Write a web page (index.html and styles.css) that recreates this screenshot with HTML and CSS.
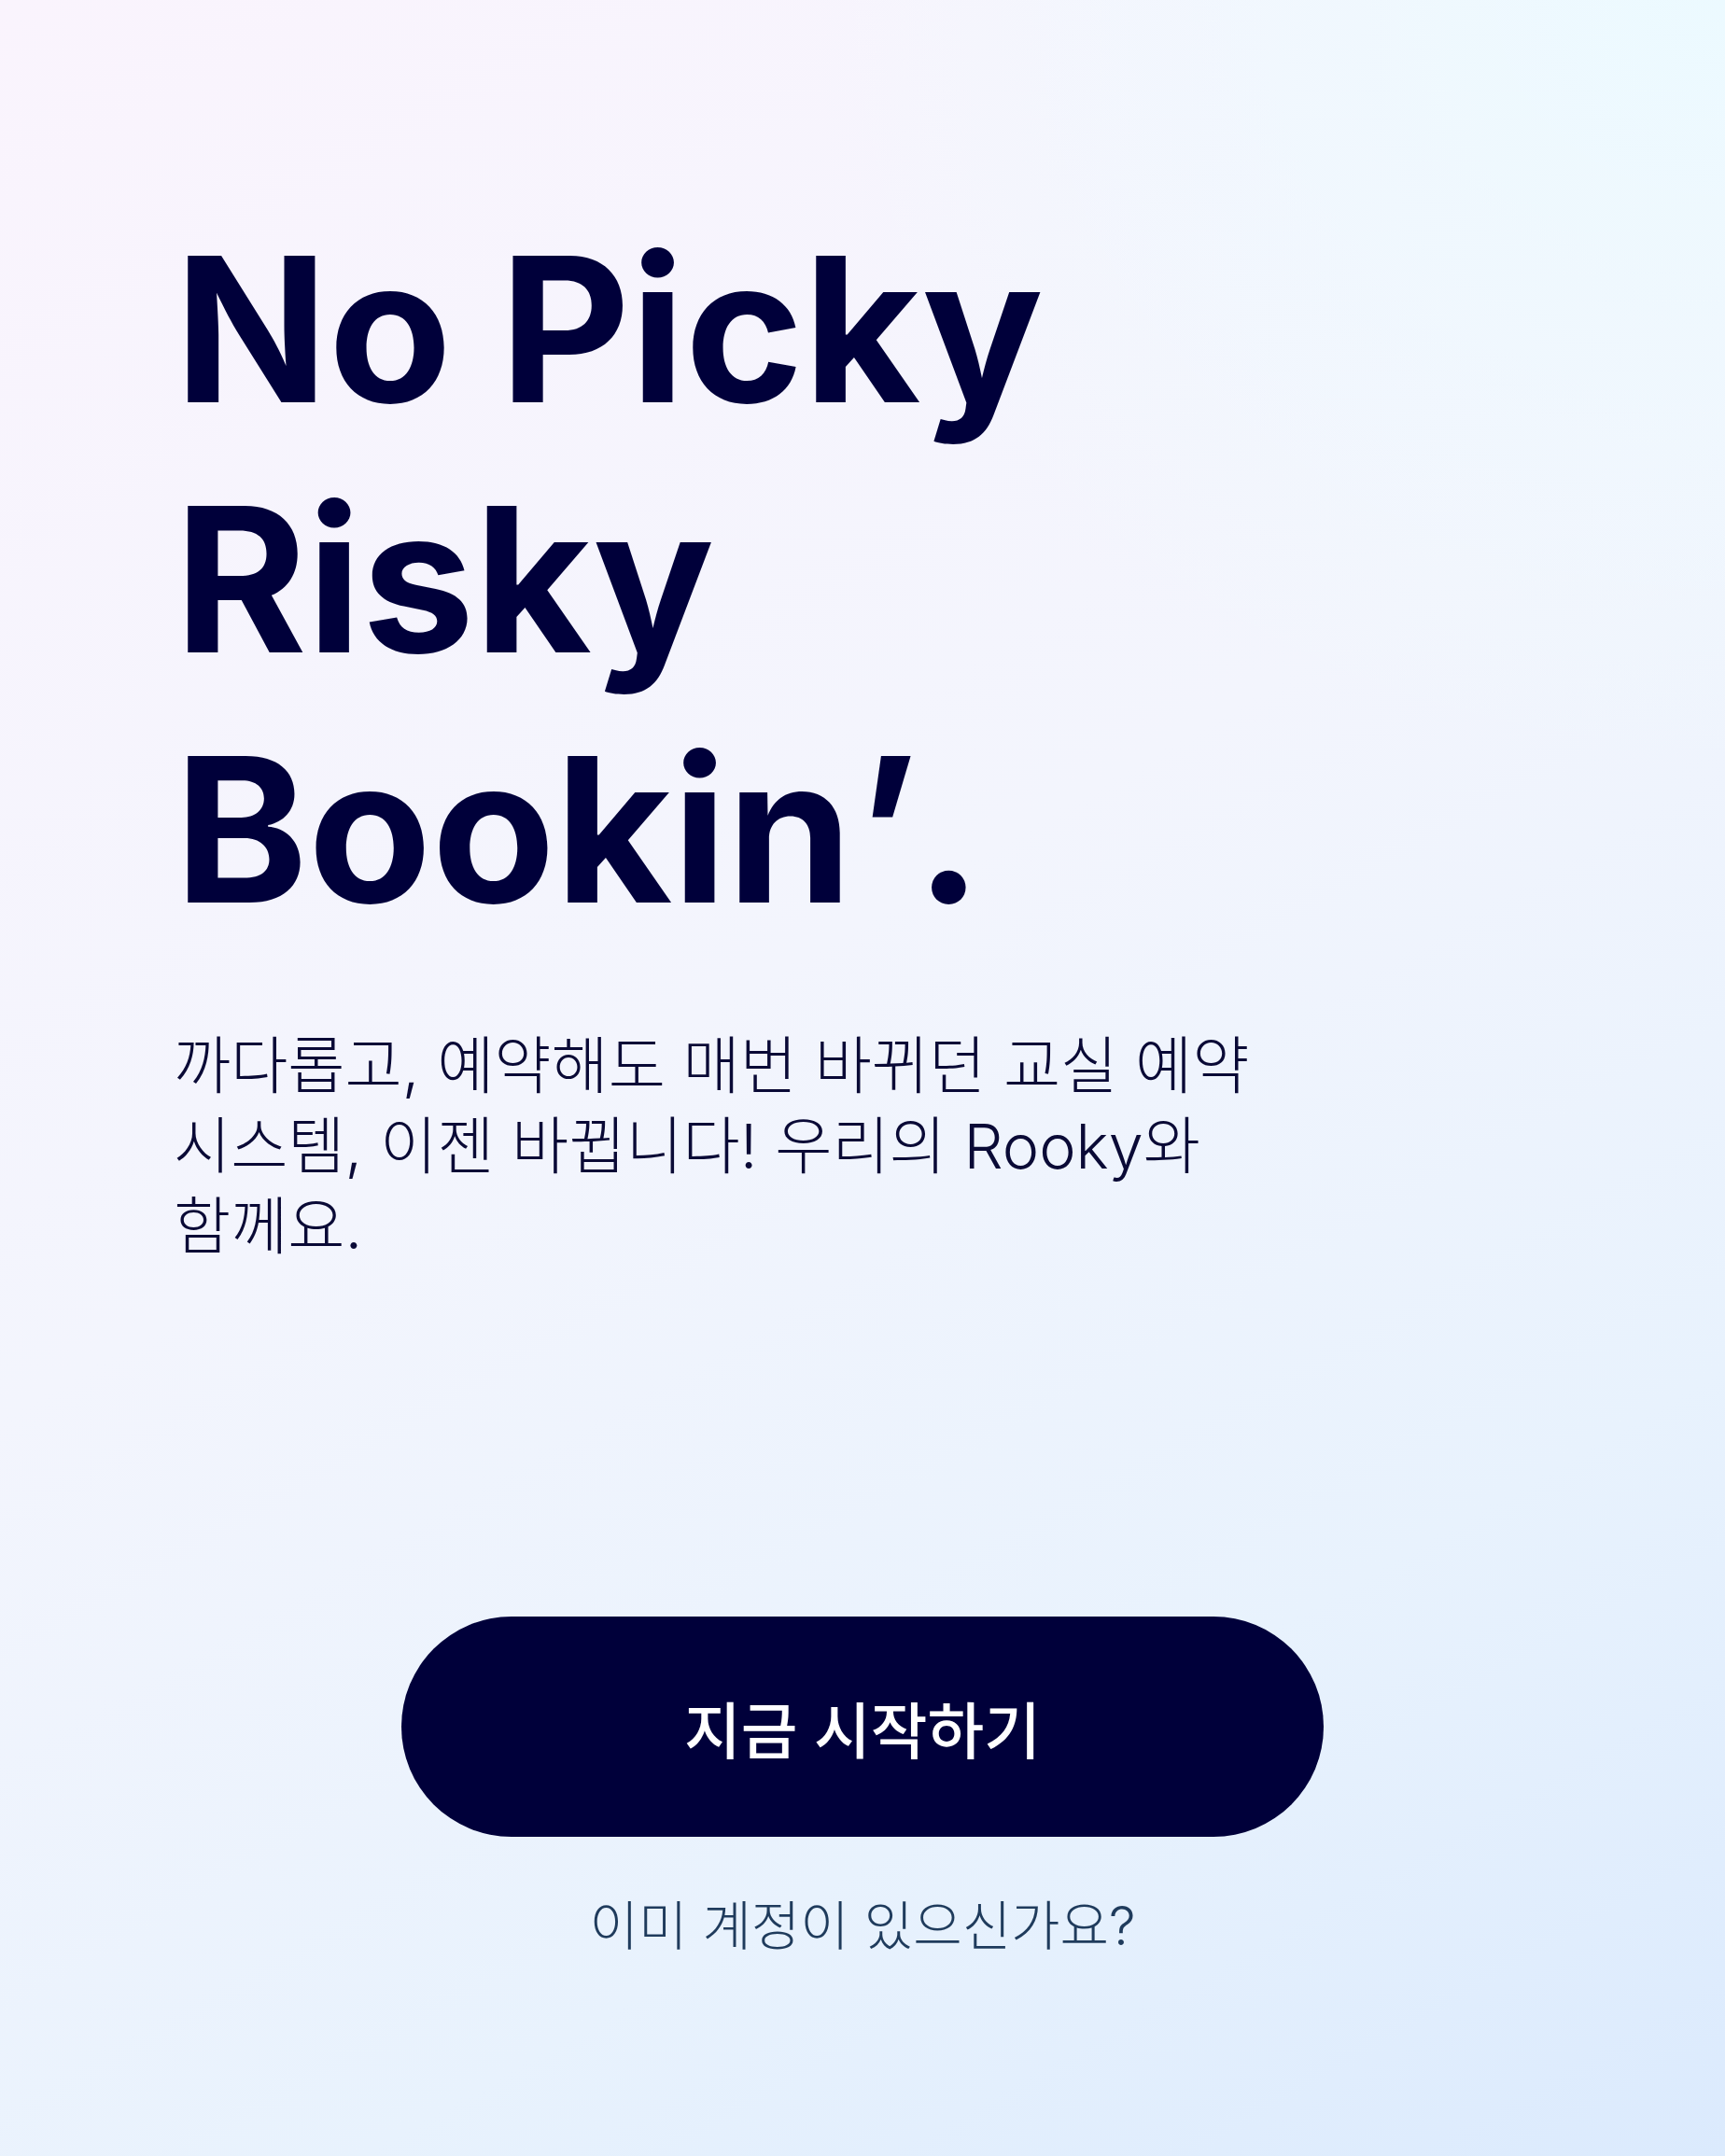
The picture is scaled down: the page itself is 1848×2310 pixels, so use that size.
FILE: index.html
```html
<!DOCTYPE html>
<html lang="ko">
<head>
<meta charset="utf-8">
<title>Rooky</title>
<link rel="stylesheet" href="styles.css">
</head>
<body>
<main class="screen">
  <section class="hero">
    <h1 class="headline">No Picky<br>Risky<br>Bookin<span class="apos">’</span><span class="dot">.</span></h1>
    <p class="lead">까다롭고, 예약해도 매번 바뀌던 교실 예약 시스템, 이젠 바뀝니다! 우리의 Rooky와 함께요.</p>
  </section>
  <section class="actions">
    <button class="cta" type="button">지금 시작하기</button>
    <a class="login" href="#">이미 계정이 있으신가요?</a>
  </section>
</main>
</body>
</html>
```

FILE: styles.css
```css
html, body {
  margin: 0;
  padding: 0;
}

body {
  width: 1848px;
  height: 2310px;
  overflow: hidden;
  font-family: Inter, "Noto Sans CJK KR", sans-serif;
  background:
    radial-gradient(ellipse 1400px 1200px at 100% 0%, rgba(236, 250, 255, 1) 0%, rgba(236, 250, 255, 0) 70%),
    linear-gradient(150deg, #faf4fd 0%, #f3f5fd 45%, #e8f2fd 75%, #dbeafd 100%);
}

.screen {
  box-sizing: border-box;
  height: 2310px;
  padding: 219px 180px 0 180px;
  display: flex;
  flex-direction: column;
}

.headline {
  margin: 0;
  padding-left: 7px;
  font-family: Inter, sans-serif;
  font-weight: 700;
  font-size: 216px;
  line-height: 268px;
  letter-spacing: 0;
  color: #00003a;
}

.apos {
  margin-left: 4px;
}

.dot {
  margin-left: -4px;
}

.lead {
  margin: 76px 0 0 6px;
  max-width: 1240px;
  font-family: Inter, "Noto Sans CJK KR", sans-serif;
  font-weight: 300;
  font-size: 66.5px;
  line-height: 86px;
  color: #0a0a36;
  word-break: keep-all;
}

.actions {
  margin-top: auto;
  margin-bottom: 210px;
  display: flex;
  flex-direction: column;
  align-items: center;
}

.cta {
  width: 988px;
  height: 236px;
  border: none;
  border-radius: 118px;
  background: #00003a;
  color: #ffffff;
  font-family: Inter, "Noto Sans CJK KR", sans-serif;
  font-weight: 500;
  font-size: 66px;
  cursor: pointer;
}

.login {
  margin-top: 60px;
  font-family: Inter, "Noto Sans CJK KR", sans-serif;
  font-weight: 300;
  font-size: 57px;
  line-height: 72px;
  color: #1f3b5c;
  text-decoration: none;
  word-break: keep-all;
}
```
